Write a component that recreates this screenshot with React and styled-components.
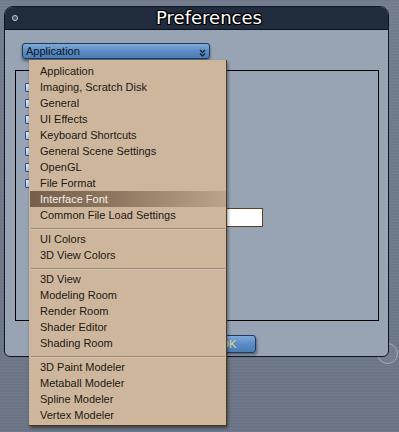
import React from 'react';
import styled, { createGlobalStyle } from 'styled-components';

const Global = createGlobalStyle`
  html, body { margin: 0; padding: 0; }
  body {
    width: 399px;
    height: 432px;
    overflow: hidden;
    background-color: #6f7989;
    background-image:
      repeating-linear-gradient(0deg, rgba(255,255,255,0.03) 0px, rgba(255,255,255,0.03) 1px, rgba(0,0,0,0.03) 2px, rgba(0,0,0,0) 3px),
      linear-gradient(180deg, #737d8d 0%, #6b7585 100%);
    font-family: "Liberation Sans", Arial, sans-serif;
  }
`;

const Stage = styled.div`
  position: relative;
  width: 399px;
  height: 432px;
  box-sizing: border-box;
  padding: 6px 0 0 4px;
`;

const ResizeKnob = styled.div`
  position: absolute;
  left: 377px;
  top: 343px;
  width: 21px;
  height: 21px;
  box-sizing: border-box;
  border-radius: 50%;
  border: 1px solid #a7aeb9;
  background: rgba(255, 255, 255, 0.05);
`;

const Window = styled.div`
  position: relative;
  z-index: 1;
  width: 385px;
  height: 351px;
  box-sizing: border-box;
  border: 1px solid #0e1626;
  border-radius: 9px 9px 6px 6px;
  background: #98a3b4;
  display: flex;
  flex-direction: column;
`;

const TitleBar = styled.div`
  height: 22px;
  background: #222c3f;
  border-bottom: 1px solid #0a0f1a;
  border-radius: 8px 8px 0 0;
  display: flex;
  align-items: center;
  padding-left: 7px;
`;

const CloseDot = styled.div`
  width: 6px;
  height: 6px;
  box-sizing: border-box;
  border-radius: 50%;
  border: 1.5px solid #c9ccd3;
  background: #4a5262;
`;

const Title = styled.div`
  flex: 1;
  text-align: center;
  padding-left: 12px;
  font-family: "DejaVu Sans", "Liberation Sans", sans-serif;
  font-size: 18px;
  line-height: 22px;
  color: #ffffff;
  text-shadow:
    -1px -1px 0 #000, 1px -1px 0 #000, -1px 1px 0 #000, 1px 1px 0 #000,
    0 -1px 0 #000, 0 1px 0 #000, -1px 0 0 #000, 1px 0 0 #000;
`;

const Body = styled.div`
  flex: 1;
  display: flex;
  flex-direction: column;
  padding: 13px 10px 0 10px;
`;

const SelectWrap = styled.div`
  position: relative;
  margin-left: 7px;
  width: 188px;
`;

const SelectBox = styled.div`
  height: 16px;
  box-sizing: border-box;
  border: 1px solid #1d3a61;
  border-radius: 3px;
  background: linear-gradient(180deg, #7eaad9 0%, #5b8cc4 50%, #4b7cb5 100%);
  box-shadow: 0 2px 3px rgba(0, 0, 0, 0.45);
  display: flex;
  align-items: center;
  justify-content: space-between;
  padding: 0 3px 0 3px;
  font-size: 11px;
  color: #0d1420;
`;

const Menu = styled.div`
  position: absolute;
  z-index: 10;
  top: 17px;
  left: 7px;
  width: 198px;
  box-sizing: border-box;
  padding: 3px 0 2px 0;
  background: #ceb69d;
  border-right: 1px solid #4e3923;
  border-bottom: 1px solid #4e3923;
  box-shadow: 1px 2px 3px rgba(0, 0, 0, 0.45);
`;

const Item = styled.div`
  height: 16px;
  line-height: 16px;
  padding-left: ${p => (p.$active ? 10 : 11)}px;
  margin-left: ${p => (p.$active ? 1 : 0)}px;
  font-size: 11px;
  white-space: nowrap;
  color: ${p => (p.$active ? '#f6eee6' : '#211911')};
  background: ${p => (p.$active ? 'linear-gradient(90deg, #76604b 0%, #8f7761 45%, #bca48b 100%)' : 'transparent')};
`;

const Separator = styled.div`
  margin: 5px 1px 1px 2px;
  border-top: 1px solid #978573;
  border-bottom: 1px solid #dccab6;
`;

const GroupBox = styled.div`
  margin-top: 11px;
  width: 364px;
  height: 251px;
  box-sizing: border-box;
  border: 1px solid #000;
  padding: 12px 0 0 9px;
  display: flex;
  flex-direction: column;
`;

const CheckRow = styled.div`
  height: 16px;
  display: flex;
  align-items: flex-start;
`;

const Check = styled.div`
  width: 9px;
  height: 9px;
  box-sizing: border-box;
  border: 1px solid #27508c;
  border-radius: 1px;
  background: linear-gradient(180deg, #e6eef9 0%, #a5c1e3 100%);
`;

const FieldRow = styled.div`
  margin-top: 13px;
  display: flex;
  padding-left: 125px;
`;

const TextField = styled.div`
  width: 113px;
  height: 19px;
  box-sizing: border-box;
  border: 1px solid #5a4020;
  background: #ffffff;
  font-size: 11px;
  line-height: 17px;
  padding-left: 4px;
  color: #111;
`;

const Footer = styled.div`
  margin-top: 14px;
  display: flex;
  justify-content: center;
  gap: 10px;
`;

const Button = styled.div`
  width: 54px;
  height: 18px;
  box-sizing: border-box;
  border: 1px solid #1d3a61;
  border-radius: 3px;
  background: linear-gradient(180deg, #7eaad9 0%, #5b8cc4 50%, #4b7cb5 100%);
  box-shadow: 1px 2px 3px rgba(0, 0, 0, 0.4);
  font-size: 11px;
  line-height: 16px;
  text-align: center;
  color: #dcdc8c;
`;

const Chevrons = () => (
  <svg width="7" height="8" viewBox="0 0 7 8" style={{ marginTop: 3 }}>
    <path d="M1 1 L3.5 3.5 L6 1 M1 4.5 L3.5 7 L6 4.5" fill="none" stroke="#0f1a2c" strokeWidth="1.2" />
  </svg>
);

const groups = [
  ['Application', 'Imaging, Scratch Disk', 'General', 'UI Effects', 'Keyboard Shortcuts', 'General Scene Settings', 'OpenGL', 'File Format', 'Interface Font', 'Common File Load Settings'],
  ['UI Colors', '3D View Colors'],
  ['3D View', 'Modeling Room', 'Render Room', 'Shader Editor', 'Shading Room'],
  ['3D Paint Modeler', 'Metaball Modeler', 'Spline Modeler', 'Vertex Modeler'],
];

export default function App() {
  return (
    <>
      <Global />
      <Stage>
        <ResizeKnob />
        <Window>
          <TitleBar>
            <CloseDot />
            <Title>Preferences</Title>
          </TitleBar>
          <Body>
            <SelectWrap>
              <SelectBox>
                <span>Application</span>
                <Chevrons />
              </SelectBox>
              <Menu>
                {groups.map((g, gi) => (
                  <React.Fragment key={gi}>
                    {gi > 0 && <Separator />}
                    {g.map(label => (
                      <Item key={label} $active={label === 'Interface Font'}>{label}</Item>
                    ))}
                  </React.Fragment>
                ))}
              </Menu>
            </SelectWrap>
            <GroupBox>
              {Array.from({ length: 7 }).map((_, i) => (
                <CheckRow key={i}><Check /></CheckRow>
              ))}
              <FieldRow>
                <TextField>Lucida Grande</TextField>
              </FieldRow>
            </GroupBox>
            <Footer>
              <Button>Cancel</Button>
              <Button>OK</Button>
            </Footer>
          </Body>
        </Window>
      </Stage>
    </>
  );
}
